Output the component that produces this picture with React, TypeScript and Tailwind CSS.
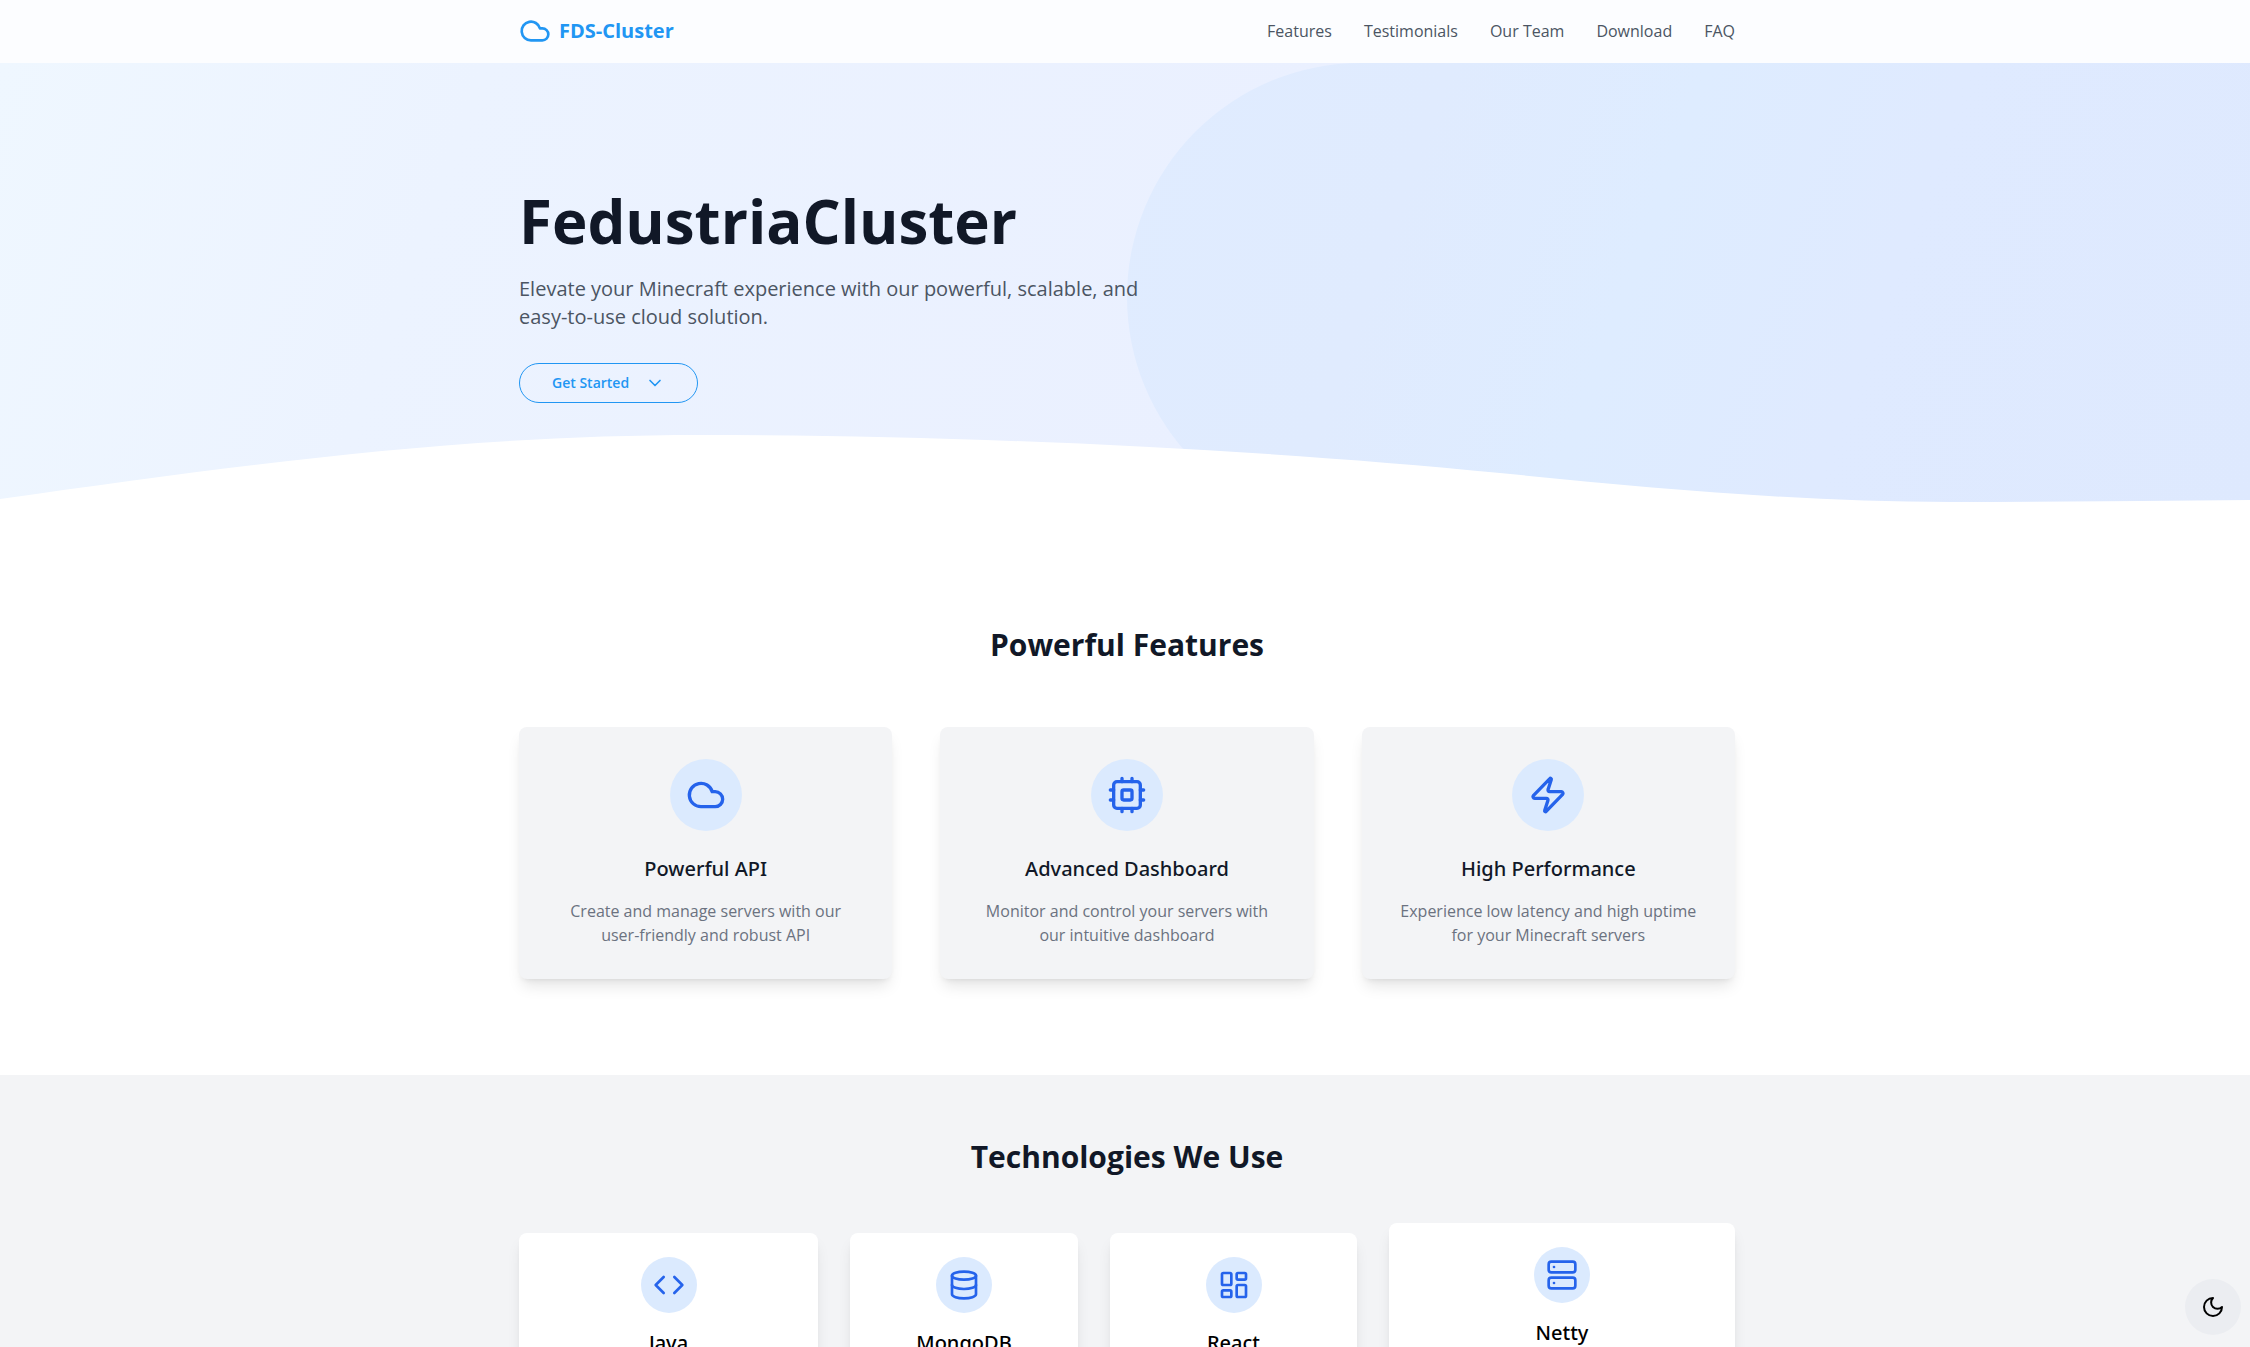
import React from "react";
import { ChevronDown, Cloud, Code, Database, LayoutDashboard, Server, Zap } from "lucide-react";

type IconProps = { className?: string };

function CpuIcon({ className }: IconProps) {
  return (
    <svg
      className={className}
      viewBox="0 0 24 24"
      fill="none"
      stroke="currentColor"
      strokeWidth="2"
      strokeLinecap="round"
      strokeLinejoin="round"
      aria-hidden="true"
    >
      <rect x="4" y="4" width="16" height="16" rx="2" />
      <rect x="9" y="9" width="6" height="6" rx="1" />
      <path d="M15 2v2M15 20v2M2 15h2M2 9h2M20 15h2M20 9h2M9 2v2M9 20v2" />
    </svg>
  );
}

function MoonIcon({ className }: IconProps) {
  return (
    <svg
      className={className}
      viewBox="0 0 24 24"
      fill="none"
      stroke="currentColor"
      strokeWidth="2"
      strokeLinecap="round"
      strokeLinejoin="round"
      aria-hidden="true"
    >
      <path d="M12 3a6 6 0 0 0 9 9 9 9 0 1 1-9-9Z" />
    </svg>
  );
}

const navLinks = [
  { label: "Features", href: "#features" },
  { label: "Testimonials", href: "#testimonials" },
  { label: "Our Team", href: "#team" },
  { label: "Download", href: "#download" },
  { label: "FAQ", href: "#faq" },
];

const features = [
  {
    title: "Powerful API",
    text: "Create and manage servers with our user-friendly and robust API",
    Icon: Cloud,
  },
  {
    title: "Advanced Dashboard",
    text: "Monitor and control your servers with our intuitive dashboard",
    Icon: CpuIcon,
  },
  {
    title: "High Performance",
    text: "Experience low latency and high uptime for your Minecraft servers",
    Icon: Zap,
  },
];

const technologies = [
  { title: "Java", Icon: Code, raised: false },
  { title: "MongoDB", Icon: Database, raised: false },
  { title: "React", Icon: LayoutDashboard, raised: false },
  { title: "Netty", Icon: Server, raised: true },
];

function Header() {
  return (
    <header className="bg-[#fcfdff] pl-1">
      <div className="mx-auto flex max-w-7xl items-center justify-between px-8 pt-[15px] pb-4">
        <a href="#top" className="flex items-center gap-2 text-xl font-bold text-[#2196f3]">
          <Cloud className="size-8" />
          FDS-Cluster
        </a>
        <nav className="flex gap-8 text-base text-[#4b5563]">
          {navLinks.map((link) => (
            <a key={link.label} href={link.href}>
              {link.label}
            </a>
          ))}
        </nav>
      </div>
    </header>
  );
}

function Hero() {
  return (
    <section className="relative overflow-hidden bg-[linear-gradient(110deg,#eff7ff_0%,#ecf3ff_20%,#eaf0ff_55%,#e8efff_100%)] py-32 pl-1">
      <div className="absolute inset-y-0 right-0 left-[calc(50%+2px)] rounded-l-full bg-[linear-gradient(110deg,#e0ecff_0%,#e0ebfe_25%,#deecff_45%,#dfeaff_65%,#dee9fe_100%)]" />
      <svg
        className="absolute inset-x-0 bottom-0 h-24 w-full"
        viewBox="0 0 2250 96"
        preserveAspectRatio="none"
        aria-hidden="true"
      >
        <path
          fill="#fff"
          d="M0 64C240 30 460 0 700 0C950 0 1250 13 1500 38C1650 53 1800 67 1950 67C2050 67 2150 66 2250 65V96H0Z"
        />
      </svg>
      <div className="relative mx-auto max-w-7xl px-8">
        <h1 className="text-6xl leading-none font-bold text-[#111827]">FedustriaCluster</h1>
        <p className="mt-6 max-w-2xl text-xl leading-7 text-[#4b5563]">
          Elevate your Minecraft experience with our powerful, scalable, and easy-to-use cloud solution.
        </p>
        <button
          type="button"
          className="mt-8 flex h-10 items-center gap-4 rounded-full border border-[#2196f3] px-8 text-sm font-semibold text-[#2196f3]"
        >
          Get Started
          <ChevronDown className="size-5" />
        </button>
      </div>
    </section>
  );
}

function Features() {
  return (
    <section id="features" className="bg-white py-24 pl-1">
      <div className="mx-auto max-w-7xl px-8">
        <h2 className="text-center text-3xl leading-9 font-bold text-[#111827]">Powerful Features</h2>
        <div className="mt-16 grid grid-cols-3 gap-12">
          {features.map(({ title, text, Icon }) => (
            <article
              key={title}
              className="flex flex-col items-center rounded-lg bg-gray-100 p-8 text-center shadow-lg"
            >
              <div className="rounded-full bg-blue-100 p-4 text-[#2563eb]">
                <Icon className="size-10" />
              </div>
              <h3 className="mt-6 font-['Noto_Sans','Open_Sans',sans-serif] text-xl leading-7 font-medium text-[#111827]">
                {title}
              </h3>
              <p className="mt-4 text-base text-[#6b7280]">{text}</p>
            </article>
          ))}
        </div>
      </div>
    </section>
  );
}

function Technologies() {
  return (
    <section className="bg-gray-100 pt-16 pl-1">
      <div className="mx-auto max-w-7xl px-8">
        <h2 className="text-center text-3xl leading-9 font-bold text-[#111827]">Technologies We Use</h2>
        <div className="mt-12 grid grid-cols-[299fr_228fr_247fr_346fr] gap-8">
          {technologies.map(({ title, Icon, raised }) => (
            <article
              key={title}
              className={
                raised
                  ? "flex flex-col items-center rounded-lg bg-white p-6 shadow-lg"
                  : "mt-2.5 flex flex-col items-center rounded-lg bg-white p-6 shadow-lg"
              }
            >
              <div className="rounded-full bg-blue-100 p-3 text-[#2563eb]">
                <Icon className="size-8" />
              </div>
              <h3 className="mt-4 font-['Noto_Sans','Open_Sans',sans-serif] text-xl leading-7 font-medium text-black">
                {title}
              </h3>
            </article>
          ))}
        </div>
      </div>
    </section>
  );
}

export default function App() {
  return (
    <div
      id="top"
      className="h-screen overflow-hidden bg-gray-100 font-['Open_Sans','Noto_Sans',sans-serif]"
    >
      <Header />
      <main>
        <Hero />
        <Features />
        <Technologies />
      </main>
      <button
        type="button"
        aria-label="Switch to dark mode"
        className="fixed right-[9px] bottom-3 rounded-full bg-[#ebedf1] p-4 text-black"
      >
        <MoonIcon className="size-6" />
      </button>
    </div>
  );
}
